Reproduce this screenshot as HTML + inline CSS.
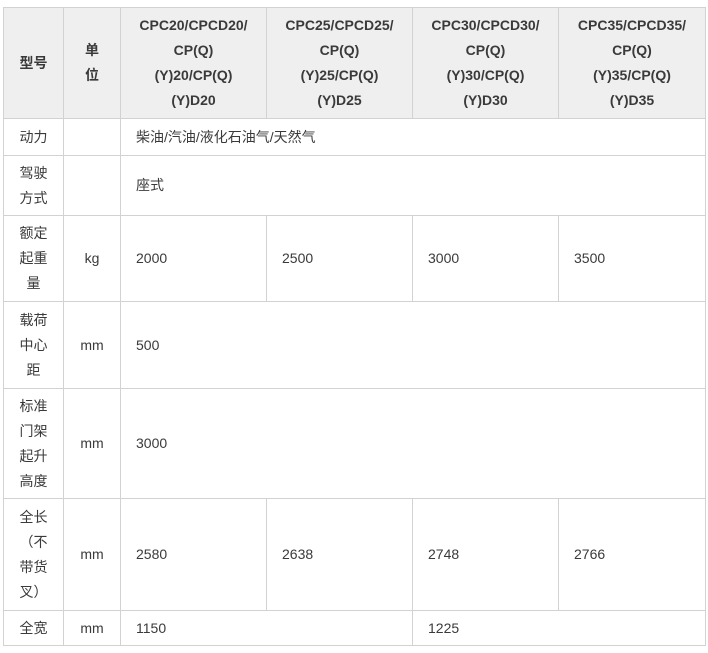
<!DOCTYPE html>
<html><head><meta charset="utf-8"><style>
body{margin:0;background:#fff;width:708px;height:653px;overflow:hidden;font-family:"Liberation Sans","Noto Sans CJK SC",sans-serif;font-size:14px;color:#3a3a3a}
table{position:absolute;left:3px;top:7px;border-collapse:collapse;table-layout:fixed;width:702px}
td,th{border:1px solid #d2d2d2;padding:0 15px;line-height:25px;vertical-align:middle;text-align:left}
th{background:#efefef;font-weight:bold;text-align:center;padding:0 6px;color:#3a3a3a}
td.c{text-align:center;padding:0 6px}
</style></head><body>
<table>
<colgroup><col style="width:60px"><col style="width:57px"><col style="width:146px"><col style="width:146px"><col style="width:146px"><col style="width:147px"></colgroup>
<tr style="height:111px"><th>型号</th><th>单<br>位</th><th>CPC20/CPCD20/<br>CP(Q)<br>(Y)20/CP(Q)<br>(Y)D20</th><th>CPC25/CPCD25/<br>CP(Q)<br>(Y)25/CP(Q)<br>(Y)D25</th><th>CPC30/CPCD30/<br>CP(Q)<br>(Y)30/CP(Q)<br>(Y)D30</th><th>CPC35/CPCD35/<br>CP(Q)<br>(Y)35/CP(Q)<br>(Y)D35</th></tr>
<tr style="height:37px"><td class="c">动力</td><td class="c"></td><td colspan="4">柴油/汽油/液化石油气/天然气</td></tr>
<tr style="height:60px"><td class="c">驾驶<br>方式</td><td class="c"></td><td colspan="4">座式</td></tr>
<tr style="height:86px"><td class="c">额定<br>起重<br>量</td><td class="c">kg</td><td>2000</td><td>2500</td><td>3000</td><td>3500</td></tr>
<tr style="height:87px"><td class="c">载荷<br>中心<br>距</td><td class="c">mm</td><td colspan="4">500</td></tr>
<tr style="height:110px"><td class="c">标准<br>门架<br>起升<br>高度</td><td class="c">mm</td><td colspan="4">3000</td></tr>
<tr style="height:112px"><td class="c">全长<br>（不<br>带货<br>叉）</td><td class="c">mm</td><td>2580</td><td>2638</td><td>2748</td><td>2766</td></tr>
<tr style="height:35px"><td class="c">全宽</td><td class="c">mm</td><td colspan="2">1150</td><td colspan="2">1225</td></tr>
</table>
</body></html>
